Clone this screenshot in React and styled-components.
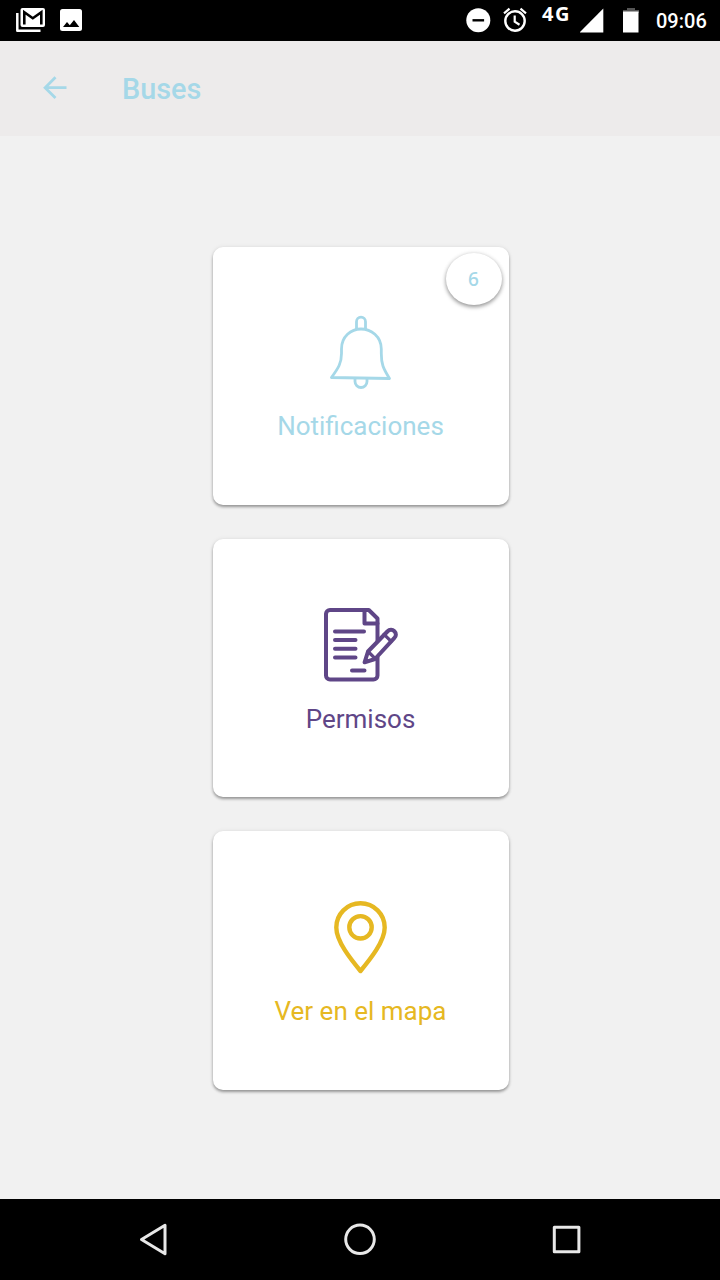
import React from "react";
import styled, { createGlobalStyle } from "styled-components";

const cards = [
  { id: "notifications", label: "Notificaciones", color: "#a5d8e8", icon: BellIcon, count: 6 },
  { id: "permissions", label: "Permisos", color: "#5f4687", icon: PermitIcon },
  { id: "map", label: "Ver en el mapa", color: "#e6b822", icon: PinIcon },
];

const App = () => {
  return (
    <>
      <GlobalStyle />
      <Screen>
        <StatusBar>
          <StatusIcons>
            <MailIcon />
            <PhotoIcon />
          </StatusIcons>
          <SystemIcons />
          <Network>4G</Network>
          <SignalIcons />
          <Clock>09:06</Clock>
        </StatusBar>
        <Header>
          <BackButton aria-label="Volver">
            <svg width="26" height="26" viewBox="0 0 26 26" fill="none" stroke="#a5d8e8" strokeWidth="2.8">
              <path d="M24.500 12.700H3.500M13.500 2.300 3.100 12.700l10.400 10.400" />
            </svg>
          </BackButton>
          <Title>Buses</Title>
        </Header>
        <Main>
          {cards.map(({ id, label, color, icon: Icon, count }) => (
            <Card key={id} $color={color}>
              <Icon />
              <Label>{label}</Label>
              {count && <Badge>{count}</Badge>}
            </Card>
          ))}
        </Main>
        <NavBar>
          <svg width="30" height="34" viewBox="0 0 30 34" fill="none" stroke="#e8e8e8" strokeWidth="3" strokeLinejoin="round">
            <path d="M27 3.300v28.400L3.500 17.500z" />
          </svg>
          <svg width="34" height="34" viewBox="0 0 34 34" fill="none" stroke="#e8e8e8" strokeWidth="3">
            <circle cx="17" cy="17.300" r="14.300" />
          </svg>
          <svg width="30" height="34" viewBox="0 0 30 34" fill="none" stroke="#e8e8e8" strokeWidth="3" strokeLinejoin="round">
            <rect x="3.300" y="5.300" width="24.600" height="24.400" />
          </svg>
        </NavBar>
      </Screen>
    </>
  );
};

export default App;

function BellIcon() {
  return (
    <svg width="80" height="80" viewBox="0 0 80 80" fill="none" stroke="currentColor" strokeWidth="2.8" strokeLinejoin="round">
      <path d="M35.500 17.500V9.700a4.500 4.500 0 0 1 9 0v7.800" />
      <path d="M10.400 65.500C17.500 56 20.500 51 20.500 41.500V37C20.500 24.500 30 17 40 17S60.300 24.500 60.300 37v4.500C60.300 52 62 56 68.500 66.500Z" />
      <path d="M34 66v3.500a6 6 0 0 0 12 0V66" />
    </svg>
  );
}

function PermitIcon() {
  return (
    <svg width="80" height="80" viewBox="0 0 80 80" fill="none" stroke="currentColor" strokeWidth="4" strokeLinecap="round" strokeLinejoin="round">
      <path d="M56.500 37.500V14.500L47.800 6H9a4 4 0 0 0-4 4v61.500a4 4 0 0 0 4 4h43.500a4 4 0 0 0 4-4V53" strokeLinecap="butt" />
      <path d="M43.500 6v13.500h13" />
      <path d="M14 27.400h29M14 36h20.500M14 44.700h20.500M14 53.400h20.500M31 66.600h12.500" />
      <path d="m43.600 58.300 3.400-10.800 19.400-20c2.200-2.200 5-2.200 7-.3s2 4.800-.2 7L54 55z" />
      <path d="m63 30.400 7.200 7M47.300 47.800l6.700 6.600" strokeWidth="3.300" />
    </svg>
  );
}

function PinIcon() {
  return (
    <svg width="80" height="80" viewBox="0 0 80 80" fill="none" stroke="currentColor" strokeWidth="4.400" strokeLinejoin="round">
      <path d="M39.500 75C30 63.500 15.300 45.500 15.300 31.500a24.200 24.200 0 0 1 48.400 0C63.700 45.500 49 63.500 39.500 75z" />
      <circle cx="39.500" cy="31.300" r="11.200" />
    </svg>
  );
}

function MailIcon() {
  return (
    <svg width="30" height="26" viewBox="0 0 30 26">
      <path d="M1.300 6v17.700H24.500" fill="none" stroke="#fff" strokeWidth="2.500" strokeLinejoin="round" />
      <rect x="4.500" y="1" width="24.500" height="19" rx="2" fill="#fff" />
      <path d="M8.300 17.500V5.200l8.500 6 8.500-6v12.300" fill="none" stroke="#000" strokeWidth="2.600" />
    </svg>
  );
}

function PhotoIcon() {
  return (
    <svg width="22" height="22" viewBox="0 0 22 22">
      <rect width="22" height="22" rx="2.500" fill="#fff" />
      <path d="M3 18l4-5 2.800 3.300L14 11l5.300 7z" fill="#000" />
    </svg>
  );
}

// do not disturb + alarm
function SystemIcons() {
  return (
    <svg width="62" height="28" viewBox="0 0 62 28" fill="none">
      <circle cx="12.300" cy="14.300" r="12" fill="#fff" />
      <path d="M6.500 14.300h11.600" stroke="#000" strokeWidth="2.400" />
      <circle cx="49" cy="15" r="9.700" stroke="#fff" strokeWidth="2.400" />
      <path d="M48.700 9.500v6.200l4.800 3M38 7.300l5.500-4.600M60 7.300l-5.500-4.600" stroke="#fff" strokeWidth="2.200" />
    </svg>
  );
}

function SignalIcons() {
  return (
    <svg width="60" height="28" viewBox="0 0 60 28">
      <path d="M-.5 26.500 23.300 2.500v24z" fill="#fff" />
      <path d="M47 2h8v2h4v3H43V4h4z" fill="#555" />
      <path d="M43 5.500h15.500v21H43z" fill="#fff" />
    </svg>
  );
}

const GlobalStyle = createGlobalStyle`
  body {
    margin: 0;
    background: #f1f1f1;
    font-family: Roboto, sans-serif;
  }

  svg {
    display: block;
    flex-shrink: 0;
  }
`

const Screen = styled.div`
display: flex;
flex-direction: column;
width: 720px;
height: 1280px;
background: #f1f1f1;
overflow: hidden;
`

const StatusBar = styled.div`
display: flex;
align-items: center;
box-sizing: border-box;
height: 41px;
padding: 0 13px 1px 16px;
background: #000;
color: #fff;
`

const StatusIcons = styled.div`
display: flex;
align-items: center;
gap: 14px;
margin-right: auto;
`

const Network = styled.span`
width: 29px;
margin: 0 9px 13px 14px;
font: 700 20px/24px "Noto Sans", sans-serif;
letter-spacing: 1.5px;
`

const Clock = styled.span`
width: 51px;
margin: 2px 0 0 16px;
font-size: 20px;
font-weight: 500;
line-height: 24px;
`

const Header = styled.header`
display: flex;
align-items: center;
box-sizing: border-box;
height: 95px;
padding: 0 0 1px 42px;
background: #edebeb;
`

const BackButton = styled.button`
padding: 0;
border: none;
background: none;
`

const Title = styled.h1`
margin: 1px 0 0 54px;
color: #a5d8e8;
font-size: 28.8px;
font-weight: 500;
line-height: 36px;
`

const Main = styled.main`
display: flex;
flex: 1;
flex-direction: column;
align-items: center;
gap: 34px;
padding: 111px 0 0 1px;
`

const Card = styled.section`
position: relative;
display: flex;
flex-direction: column;
align-items: center;
box-sizing: border-box;
width: 296px;
height: 258.2px;
padding-top: 64.6px;
border-radius: 10px;
background: #fff;
box-shadow: 0 2px 3px rgba(0, 0, 0, 0.36), 0 0 5px rgba(0, 0, 0, 0.07);
color: ${(props) => props.$color};
`

const Label = styled.span`
margin-top: 17.8px;
font-size: 26px;
line-height: 34px;
`

const Badge = styled.span`
position: absolute;
top: 6px;
right: 7px;
width: 56px;
height: 52px;
border-radius: 50%;
background: #fff;
box-shadow: 0 2px 4px rgba(0, 0, 0, 0.4), 0 0 5px rgba(0, 0, 0, 0.08);
font: 500 19px/52px "Noto Sans", sans-serif;
text-align: center;
`

const NavBar = styled.nav`
display: flex;
align-items: center;
justify-content: space-between;
box-sizing: border-box;
height: 81px;
padding: 0 139px 1px 138px;
background: #000;
`
